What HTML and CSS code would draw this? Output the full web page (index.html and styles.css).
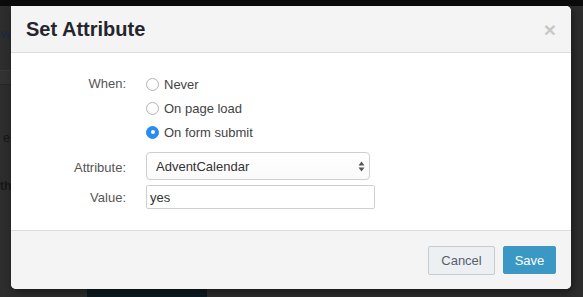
FILE: index.html
```html
<!DOCTYPE html>
<html>
<head>
<meta charset="utf-8">
<link rel="stylesheet" href="styles.css">
</head>
<body>
<div class="page">
  <div class="topbar"></div>
  <div class="behind">
    <div class="b-link">w</div>
    <div class="b-band"></div>
    <div class="b-text b-e">e</div>
    <div class="b-text b-th">th</div>
    <div class="b-btn"></div>
  </div>
</div>
<div class="modal">
  <div class="modal-header">
    <h2 class="title">Set Attribute</h2>
    <span class="close">×</span>
  </div>
  <div class="modal-body">
    <div class="form">
      <div class="lbl lbl-when">When:</div>
      <div class="radios">
        <label class="radio"><span class="dot"></span>Never</label>
        <label class="radio"><span class="dot"></span>On page load</label>
        <label class="radio"><span class="dot checked"></span>On form submit</label>
      </div>
      <div class="lbl lbl-attr">Attribute:</div>
      <div class="select">
        <span>AdventCalendar</span>
        <svg class="arrows" width="7" height="11" viewBox="0 0 7 11"><path d="M3.5 0.5 L6.5 4.5 L0.5 4.5 Z M3.5 10.5 L6.5 6.5 L0.5 6.5 Z" fill="#555"/></svg>
      </div>
      <div class="lbl lbl-val">Value:</div>
      <div class="input">yes</div>
    </div>
  </div>
  <div class="modal-footer">
    <button class="btn btn-cancel">Cancel</button>
    <button class="btn btn-save">Save</button>
  </div>
</div>
</body>
</html>
```

FILE: styles.css
```css
html, body {
  margin: 0;
  padding: 0;
}
body {
  width: 583px;
  height: 297px;
  overflow: hidden;
  background: #2d2d2d;
  font-family: "Liberation Sans", Arial, sans-serif;
  position: relative;
}
.page {
  display: flex;
  flex-direction: column;
}
.topbar {
  height: 6px;
  background: #0b0b0c;
}
.behind {
  position: relative;
  height: 291px;
}
.b-link {
  position: absolute;
  left: 1px;
  top: 20px;
  font-size: 13px;
  color: #1b2a3c;
}
.b-band {
  position: absolute;
  left: 0;
  top: 64px;
  width: 20px;
  height: 13px;
  background: #323232;
  border-top: 1px solid #3a3a3a;
  border-bottom: 1px solid #262626;
}
.b-text {
  position: absolute;
  font-size: 13px;
  color: #161616;
}
.b-e {
  left: 3px;
  top: 124px;
}
.b-th {
  left: 0;
  top: 173px;
  font-size: 12px;
  font-weight: bold;
}
.b-btn {
  position: absolute;
  left: 87px;
  top: 283px;
  width: 120px;
  height: 20px;
  background: #0c1b21;
}
.modal {
  position: absolute;
  left: 11px;
  top: 6px;
  width: 560px;
  height: 283px;
  background: #fff;
  border-radius: 0 5px 5px 5px;
  box-shadow: 2px 3px 8px rgba(0,0,0,0.45);
  display: flex;
  flex-direction: column;
  overflow: hidden;
}
.modal-header {
  height: 46px;
  background: #f4f4f4;
  border-bottom: 1px solid #dcdcdc;
  display: flex;
  align-items: center;
  justify-content: space-between;
  padding: 0 15px 0 15px;
  box-sizing: content-box;
}
.title {
  margin: 0;
  font-size: 20px;
  font-weight: bold;
  color: #25262d;
  padding-top: 1px;
}
.close {
  font-size: 21px;
  font-weight: bold;
  color: #c8c8c8;
  line-height: 1;
  margin-top: 1px;
  margin-right: 0;
}
.modal-body {
  flex: 1;
  padding: 19px 0 0 0;
}
.form {
  display: grid;
  grid-template-columns: 115px auto;
  column-gap: 20px;
  align-items: center;
}
.lbl {
  text-align: right;
  font-size: 13px;
  color: #555;
}
.lbl-when {
  align-self: start;
  line-height: 24px;
}
.radios {
  display: flex;
  flex-direction: column;
  margin-bottom: 8px;
}
.radio {
  height: 24px;
  display: flex;
  align-items: center;
  font-size: 13px;
  color: #444;
}
.dot {
  width: 11px;
  height: 11px;
  border: 1px solid #b2b2b2;
  border-radius: 50%;
  background: #fff;
  margin-right: 5px;
  position: relative;
  flex: none;
}
.dot.checked {
  background: #2a8cf3;
  border-color: #2a8cf3;
}
.dot.checked::after {
  content: "";
  position: absolute;
  left: 3.5px;
  top: 3.5px;
  width: 4px;
  height: 4px;
  border-radius: 50%;
  background: #fff;
}
.lbl-attr {
  padding-bottom: 2px;
}
.select {
  height: 26px;
  border: 1px solid #cfcfcf;
  border-radius: 4px;
  background: linear-gradient(#fff, #fafafa);
  box-sizing: content-box;
  display: flex;
  align-items: center;
  justify-content: space-between;
  padding: 0 4px 0 9px;
  font-size: 13px;
  color: #333;
  width: 209px;
  margin-bottom: 5px;
}
.arrows {
  display: block;
}
.input {
  width: 224px;
  height: 22px;
  border: 1px solid #cfcfcf;
  border-radius: 2px;
  padding: 0 0 0 3px;
  font-size: 13px;
  color: #333;
  display: flex;
  align-items: center;
}
.modal-footer {
  height: 59px;
  background: #f4f4f4;
  border-top: 1px solid #dcdcdc;
  display: flex;
  justify-content: flex-end;
  align-items: center;
  gap: 8px;
  padding: 0 15px;
  box-sizing: border-box;
}
.btn {
  font-family: "Liberation Sans", Arial, sans-serif;
  font-size: 13px;
  height: 29px;
  border-radius: 2px;
  padding: 0;
  cursor: pointer;
}
.btn-cancel {
  width: 67px;
  background: #edf0f2;
  border: 1px solid #c6cbd0;
  color: #56616b;
}
.btn-save {
  width: 53px;
  height: 28px;
  background: #3b98c5;
  border: 1px solid #3b98c5;
  color: #fff;
}
```
